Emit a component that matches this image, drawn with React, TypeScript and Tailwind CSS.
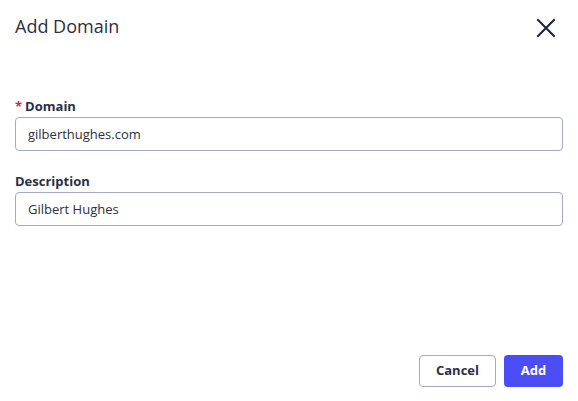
import { useState } from 'react';

export default function App() {
  const [domain, setDomain] = useState('gilberthughes.com');
  const [description, setDescription] = useState('Gilbert Hughes');

  return (
    <div
      className="h-screen bg-white flex flex-col px-[15px] pt-[14px] pb-[14px] text-[#2b2f45]"
      style={{ fontFamily: '"Open Sans", "Noto Sans", sans-serif' }}
    >
      <header className="flex items-start justify-between">
        <h1 className="text-[18px] leading-[24px] font-normal">Add Domain</h1>
        <button className="mt-[3px] mr-[6px] w-[22px] h-[22px] flex items-center justify-center text-[#1e2139]">
          <svg width="20" height="20" viewBox="0 0 20 20" fill="none" stroke="currentColor" strokeWidth="2" strokeLinecap="square">
            <path d="M2 2L18 18M18 2L2 18" />
          </svg>
        </button>
      </header>

      <div className="mt-[58px] flex flex-col gap-[21px]">
        <div>
          <label className="block text-[13px] leading-[18px] font-bold mb-[2px]">
            <span className="text-[#d6244f] mr-[3px]">*</span>Domain
          </label>
          <input
            value={domain}
            onChange={(e) => setDomain(e.target.value)}
            className="w-full h-[34px] px-[12px] border border-[#a3abc4] rounded-[4px] text-[13px] text-[#2c2f40] outline-none"
          />
        </div>
        <div>
          <label className="block text-[13px] leading-[18px] font-bold mb-[2px]">Description</label>
          <input
            value={description}
            onChange={(e) => setDescription(e.target.value)}
            className="w-full h-[34px] px-[12px] border border-[#a3abc4] rounded-[4px] text-[13px] text-[#2c2f40] outline-none"
          />
        </div>
      </div>

      <div className="mt-auto flex justify-end gap-[8px]">
        <button className="w-[77px] h-[32px] border border-[#a3abc4] rounded-[4px] text-[13px] font-bold text-[#2b2f45] bg-white">
          Cancel
        </button>
        <button className="w-[59px] h-[32px] rounded-[4px] text-[13px] font-bold text-white bg-[#4d4df5]">
          Add
        </button>
      </div>
    </div>
  );
}
